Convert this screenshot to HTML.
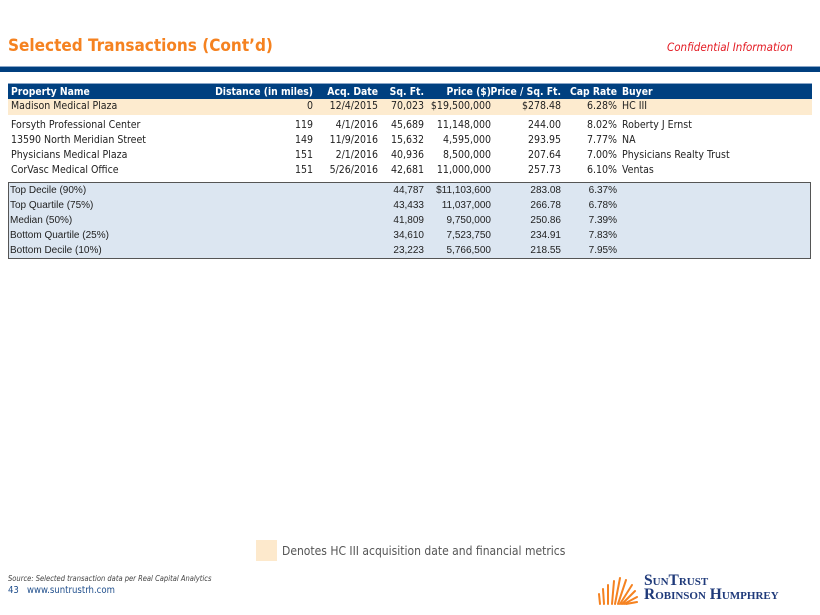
<!DOCTYPE html>
<html><head><meta charset="utf-8"><style>
body{margin:0;width:820px;height:615px;background:#fff;position:relative;overflow:hidden;font-family:"DejaVu Sans Condensed","Liberation Sans",sans-serif;font-size:10.5px;color:#222}
.a{position:absolute;white-space:nowrap}
.row{position:absolute;left:8px;width:804px;height:15px}
.row span{position:absolute;top:1px;white-space:nowrap}
.s span{font-family:"Liberation Sans",sans-serif;font-size:10px}
</style></head><body>
<div class="a" style="left:8px;top:36px;font-size:17px;font-weight:bold;color:#f58220;font-family:'DejaVu Sans Condensed',sans-serif">Selected Transactions (Cont’d)</div>
<div class="a" style="left:667px;top:40px;font-size:11.5px;font-style:italic;color:#e31b23">Confidential Information</div>
<div class="a" style="left:0;top:66px;width:820px;height:1px;background:#8aa6c8"></div>
<div class="a" style="left:0;top:67px;width:820px;height:5px;background:#003f7f"></div>

<div class="row" style="top:83px;height:17px;background:#004080;color:#fff;font-weight:bold;border-top:1px solid #8aa6c8;font-size:10.3px">
<span style="left:3px;top:2px">Property Name</span>
<span style="right:499px;top:2px">Distance (in miles)</span>
<span style="right:434px;top:2px">Acq. Date</span>
<span style="right:388px;top:2px">Sq. Ft.</span>
<span style="right:321px;top:2px">Price ($)</span>
<span style="right:251px;top:2px">Price / Sq. Ft.</span>
<span style="right:195px;top:2px">Cap Rate</span>
<span style="left:614px;top:2px">Buyer</span>
</div>
<div class="row" style="top:99px;height:16px;background:#fdebcf">
<span style="left:3px">Madison Medical Plaza</span><span style="right:499px">0</span><span style="right:434px">12/4/2015</span><span style="right:388px">70,023</span><span style="right:321px">$19,500,000</span><span style="right:251px">$278.48</span><span style="right:195px">6.28%</span><span style="left:614px">HC III</span>
</div>
<div class="row" style="top:118px">
<span style="left:3px">Forsyth Professional Center</span><span style="right:499px">119</span><span style="right:434px">4/1/2016</span><span style="right:388px">45,689</span><span style="right:321px">11,148,000</span><span style="right:251px">244.00</span><span style="right:195px">8.02%</span><span style="left:614px">Roberty J Ernst</span>
</div>
<div class="row" style="top:133px">
<span style="left:3px">13590 North Meridian Street</span><span style="right:499px">149</span><span style="right:434px">11/9/2016</span><span style="right:388px">15,632</span><span style="right:321px">4,595,000</span><span style="right:251px">293.95</span><span style="right:195px">7.77%</span><span style="left:614px">NA</span>
</div>
<div class="row" style="top:148px">
<span style="left:3px">Physicians Medical Plaza</span><span style="right:499px">151</span><span style="right:434px">2/1/2016</span><span style="right:388px">40,936</span><span style="right:321px">8,500,000</span><span style="right:251px">207.64</span><span style="right:195px">7.00%</span><span style="left:614px">Physicians Realty Trust</span>
</div>
<div class="row" style="top:163px">
<span style="left:3px">CorVasc Medical Office</span><span style="right:499px">151</span><span style="right:434px">5/26/2016</span><span style="right:388px">42,681</span><span style="right:321px">11,000,000</span><span style="right:251px">257.73</span><span style="right:195px">6.10%</span><span style="left:614px">Ventas</span>
</div>

<div class="a" style="left:8px;top:182px;width:801px;height:75px;background:#dce6f1;border:1px solid #555"></div>
<div class="row s" style="top:184px"><span style="left:2px">Top Decile (90%)</span><span style="right:388px">44,787</span><span style="right:321px">$11,103,600</span><span style="right:251px">283.08</span><span style="right:195px">6.37%</span></div>
<div class="row s" style="top:199px"><span style="left:2px">Top Quartile (75%)</span><span style="right:388px">43,433</span><span style="right:321px">11,037,000</span><span style="right:251px">266.78</span><span style="right:195px">6.78%</span></div>
<div class="row s" style="top:214px"><span style="left:2px">Median (50%)</span><span style="right:388px">41,809</span><span style="right:321px">9,750,000</span><span style="right:251px">250.86</span><span style="right:195px">7.39%</span></div>
<div class="row s" style="top:229px"><span style="left:2px">Bottom Quartile (25%)</span><span style="right:388px">34,610</span><span style="right:321px">7,523,750</span><span style="right:251px">234.91</span><span style="right:195px">7.83%</span></div>
<div class="row s" style="top:244px"><span style="left:2px">Bottom Decile (10%)</span><span style="right:388px">23,223</span><span style="right:321px">5,766,500</span><span style="right:251px">218.55</span><span style="right:195px">7.95%</span></div>

<div class="a" style="left:256px;top:540px;width:21px;height:21px;background:#fde9cc"></div>
<div class="a" style="left:282px;top:544px;font-size:12px;color:#555">Denotes HC III acquisition date and financial metrics</div>
<div class="a" style="left:8px;top:574px;font-size:7.5px;font-style:italic;color:#444">Source: Selected transaction data per Real Capital Analytics</div>
<div class="a" style="left:8px;top:585px;font-size:9.5px;color:#1f4e8c">43&nbsp;&nbsp;&nbsp;www.suntrustrh.com</div>

<svg class="a" style="left:596px;top:574px" width="44" height="32" viewBox="0 0 44 32">
<g stroke="#f58220" stroke-width="2" stroke-linecap="round">
<line x1="4" y1="30" x2="3" y2="20"/><line x1="8" y1="30" x2="7" y2="15"/><line x1="12" y1="30" x2="12" y2="11"/>
<line x1="16" y1="30" x2="18" y2="7"/><line x1="19" y1="30" x2="24" y2="4"/><line x1="22" y1="30" x2="30" y2="6"/>
<line x1="24" y1="30" x2="36" y2="11"/><line x1="26" y1="30" x2="39" y2="17"/><line x1="28" y1="30" x2="41" y2="23"/><line x1="30" y1="30" x2="41" y2="28"/>
</g></svg>
<div class="a" style="left:644px;top:574px;font-family:'Liberation Serif',serif;font-weight:bold;color:#1f3a7a;font-size:15.5px;line-height:14px;font-variant:small-caps">SunTrust<br>Robinson Humphrey</div>
</body></html>
